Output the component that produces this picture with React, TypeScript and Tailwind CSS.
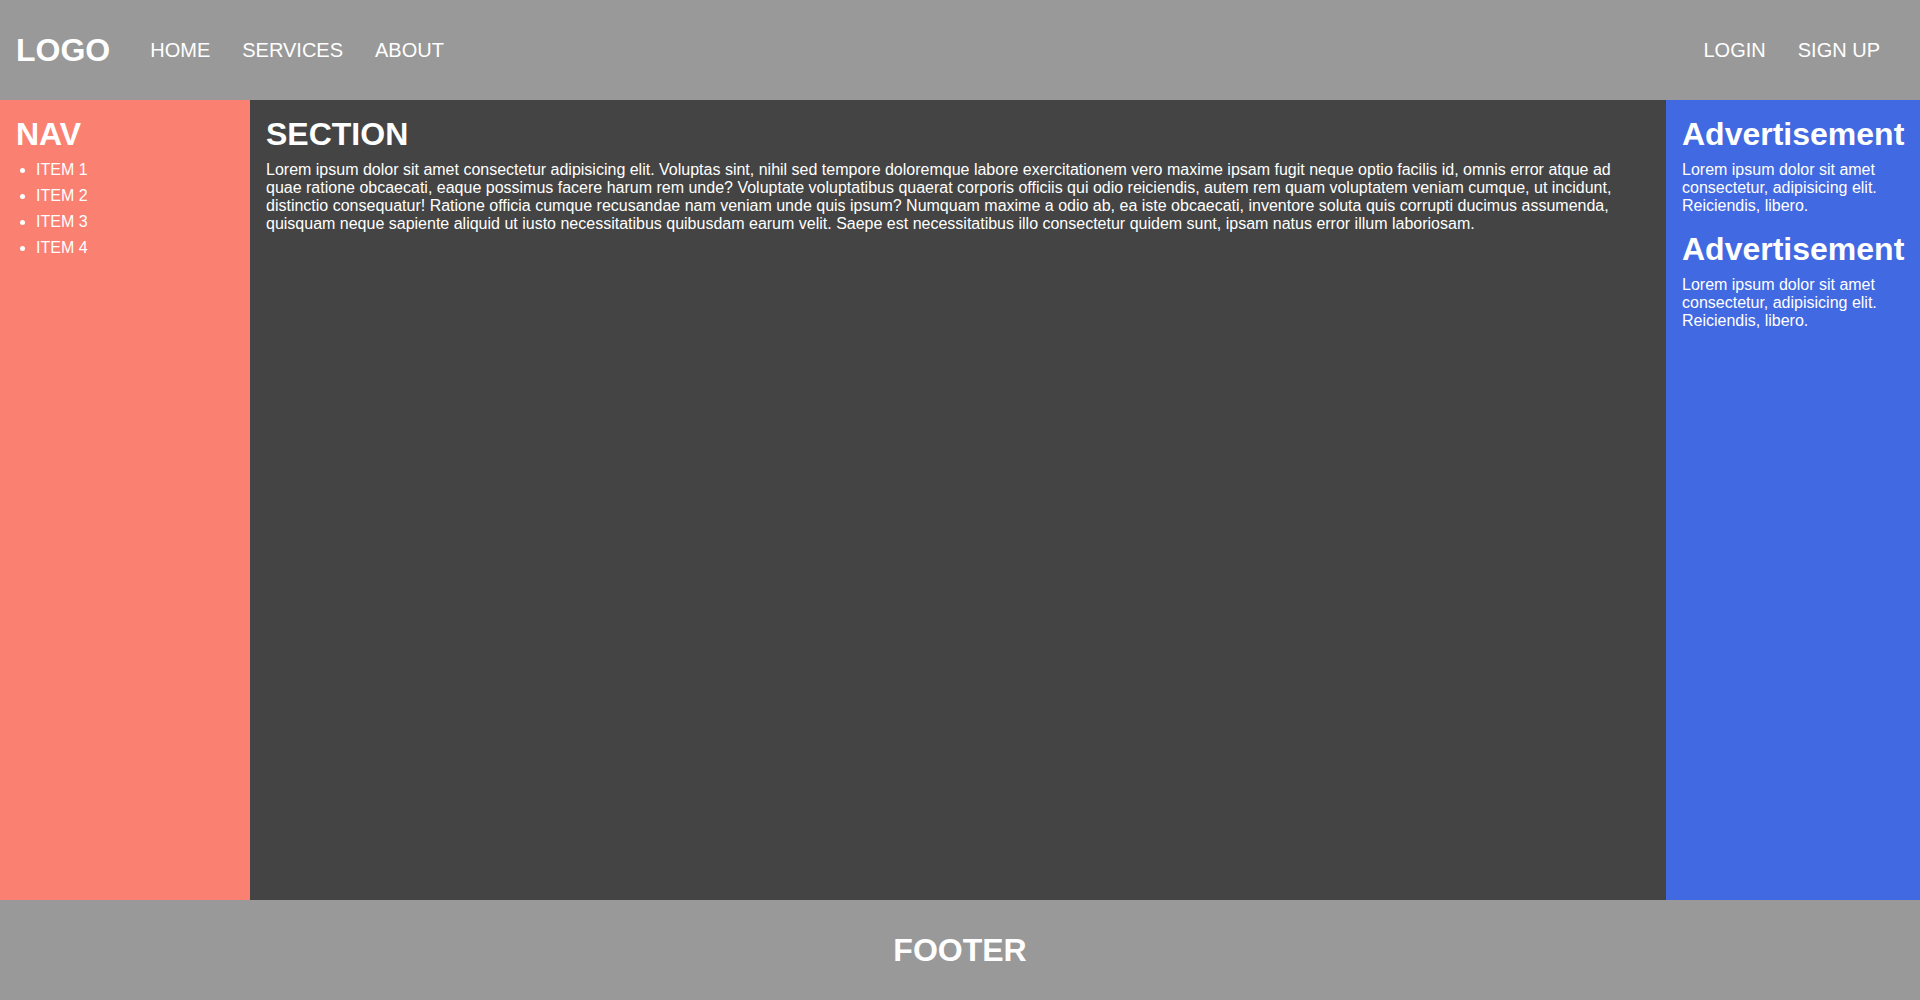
import React from "react";

const lorem =
  "Lorem ipsum dolor sit amet consectetur adipisicing elit. Voluptas sint, nihil sed tempore doloremque labore exercitationem vero maxime ipsam fugit neque optio facilis id, omnis error atque ad quae ratione obcaecati, eaque possimus facere harum rem unde? Voluptate voluptatibus quaerat corporis officiis qui odio reiciendis, autem rem quam voluptatem veniam cumque, ut incidunt, distinctio consequatur! Ratione officia cumque recusandae nam veniam unde quis ipsum? Numquam maxime a odio ab, ea iste obcaecati, inventore soluta quis corrupti ducimus assumenda, quisquam neque sapiente aliquid ut iusto necessitatibus quibusdam earum velit. Saepe est necessitatibus illo consectetur quidem sunt, ipsam natus error illum laboriosam.";

const adText = "Lorem ipsum dolor sit amet consectetur, adipisicing elit. Reiciendis, libero.";

export default function App() {
  return (
    <div
      className="flex h-[1000px] w-full flex-col text-white"
      style={{ fontFamily: '"Liberation Sans", Arial, sans-serif' }}
    >
      <header className="flex h-[100px] shrink-0 items-center bg-[#999999] pl-4 pr-10">
        <div className="text-[32px] font-bold leading-[37px]">LOGO</div>
        <nav className="ml-10 flex gap-8 text-[20px] leading-[23px]">
          <a>HOME</a>
          <a>SERVICES</a>
          <a>ABOUT</a>
        </nav>
        <div className="ml-auto flex gap-8 text-[20px] leading-[23px]">
          <a>LOGIN</a>
          <a>SIGN UP</a>
        </div>
      </header>
      <div className="flex min-h-0 flex-1">
        <aside className="w-[250px] shrink-0 bg-[#fa8072] p-4">
          <h2 className="text-[32px] font-bold leading-[37px]">NAV</h2>
          <ul className="mt-[8px] flex list-disc flex-col gap-2 pl-5 text-[16px] leading-[18px]">
            <li>ITEM 1</li>
            <li>ITEM 2</li>
            <li>ITEM 3</li>
            <li>ITEM 4</li>
          </ul>
        </aside>
        <main className="min-w-0 flex-1 bg-[#444444] p-4">
          <h2 className="text-[32px] font-bold leading-[37px]">SECTION</h2>
          <p className="mt-[8px] text-[16px] leading-[18px]">{lorem}</p>
        </main>
        <aside className="w-[254px] shrink-0 bg-[#4169e1] p-4">
          <div className="flex flex-col gap-[16px]">
            <div>
              <h2 className="text-[32px] font-bold leading-[37px] whitespace-nowrap">Advertisement</h2>
              <p className="mt-[8px] text-[16px] leading-[18px]">{adText}</p>
            </div>
            <div>
              <h2 className="text-[32px] font-bold leading-[37px] whitespace-nowrap">Advertisement</h2>
              <p className="mt-[8px] text-[16px] leading-[18px]">{adText}</p>
            </div>
          </div>
        </aside>
      </div>
      <footer className="flex h-[100px] shrink-0 items-center justify-center bg-[#999999]">
        <div className="text-[32px] font-bold leading-[37px]">FOOTER</div>
      </footer>
    </div>
  );
}
